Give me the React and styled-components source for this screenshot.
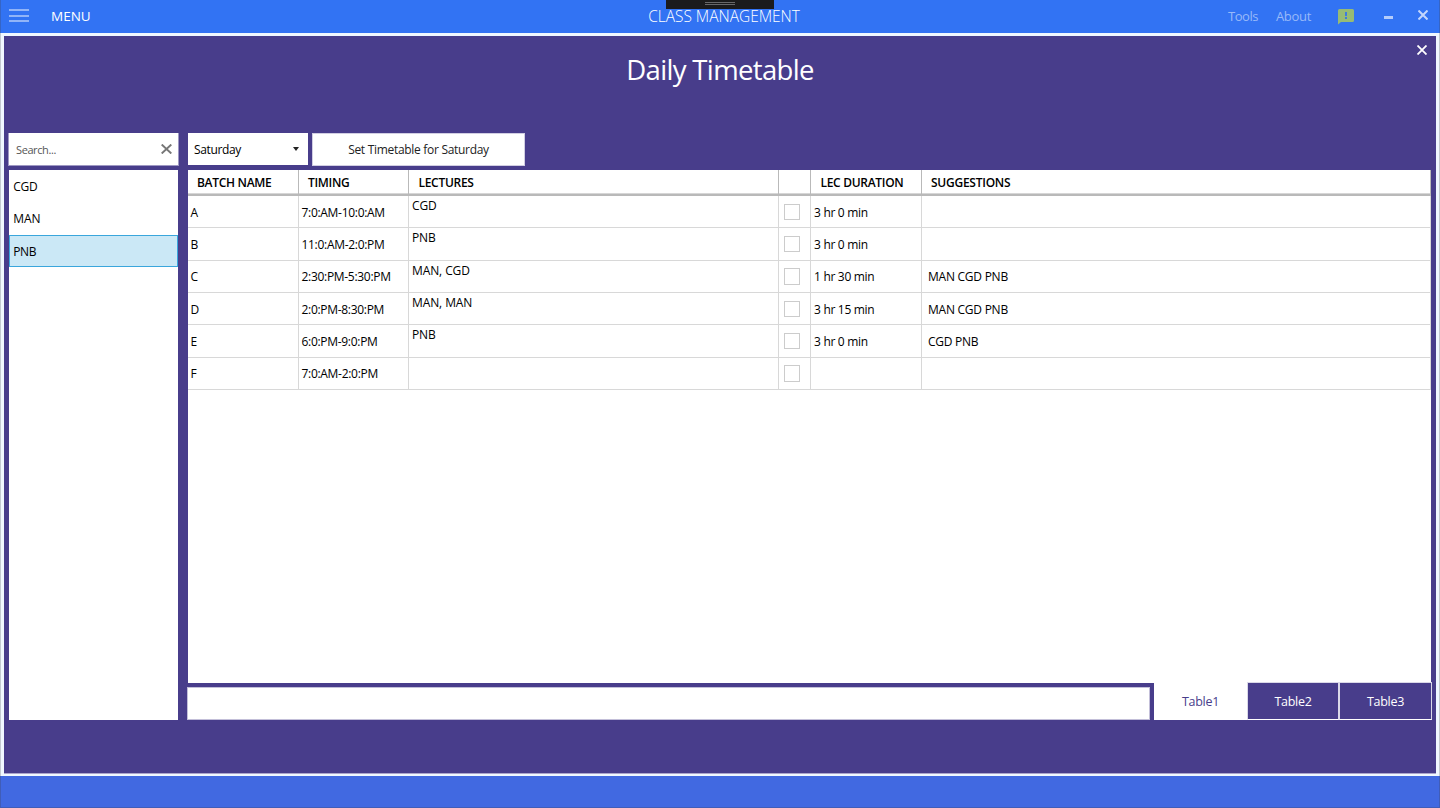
import React from "react";
import styled, { createGlobalStyle } from "styled-components";

const purple = "#483d8b";

const GlobalStyle = createGlobalStyle`
  * { box-sizing: border-box; }
  body {
    margin: 0;
    overflow: hidden;
    font-family: "Open Sans", "Noto Sans", sans-serif;
    font-size: 12px;
    color: #000;
  }
  svg { display: block; flex: none; }
`;

const Label = styled.span`
  display: block;
  flex: none;
  white-space: pre;
  line-height: 16px;
  letter-spacing: ${(p) => p.$ls ?? -0.3}px;
`;

const Window = styled.div`
  position: relative;
  display: flex;
  flex-direction: column;
  width: 1440px;
  height: 808px;
  background: #f0f8ff;
  &::after {
    content: "";
    position: absolute;
    inset: 0;
    border: solid rgba(60, 60, 70, 0.26);
    border-width: 0 1px 1px;
    pointer-events: none;
  }
`;

const TitleBar = styled.header`
  position: relative;
  display: flex;
  align-items: center;
  height: 33px;
  padding-left: 9px;
  background: #3273f3;
  color: #fff;
`;

const Burger = styled.div`
  display: flex;
  flex-direction: column;
  justify-content: space-between;
  width: 20px;
  height: 13px;
  margin: -2px 22px 0 0;
  i {
    height: 2px;
    background: #91b4f8;
  }
`;

const Menu = styled(Label)`
  margin-top: -2px;
  font-size: 13.5px;
`;

const AppName = styled.div`
  position: absolute;
  inset: 0;
  display: flex;
  justify-content: center;
  padding: 8px 0 0 8px;
  font-size: 15.5px;
  font-weight: 300;
  pointer-events: none;
`;

const Commands = styled.nav`
  display: flex;
  align-items: center;
  height: 33px;
  margin-left: auto;
  padding-right: 12px;
  font-size: 13px;
  color: #98b9f9;
`;

const Command = styled(Label)`
  margin: -1px 0 0 18px;
`;

const FeedbackIcon = styled.svg`
  margin-left: 27px;
`;

const MinimizeIcon = styled.svg`
  margin: 2px 0 0 30px;
`;

const CloseIcon = styled.svg`
  margin: -3px 0 0 25px;
`;

const Grip = styled.div`
  position: absolute;
  top: 0;
  left: 666px;
  width: 108px;
  height: 9px;
  padding: 2px 39px 0;
  background: #1b1b1c;
  i {
    display: block;
    height: 3px;
    border: solid #68686a;
    border-width: 1px 0;
  }
`;

const Panel = styled.main`
  display: flex;
  flex-direction: column;
  height: 738px;
  margin: 3px 4px 2px;
  padding: 0 4px;
  background: ${purple};
  border-bottom: 1px solid #aca6cc;
`;

const PanelHead = styled.div`
  display: flex;
  justify-content: center;
  position: relative;
  height: 97px;
  padding-top: 16px;
  color: #fff;
  font-size: 27.5px;
  ${Label} { line-height: 36px; }
`;

const PanelClose = styled.svg`
  position: absolute;
  top: 9px;
  right: 5px;
`;

const Columns = styled.div`
  display: flex;
  gap: 8px;
  height: 587px;
`;

const Sidebar = styled.aside`
  display: flex;
  flex-direction: column;
  gap: 4px;
  width: 171px;
`;

const SearchBox = styled.div`
  display: flex;
  align-items: center;
  justify-content: space-between;
  height: 33px;
  padding: 0 6px 0 7px;
  background: #fff;
  border: solid #9e98c3;
  border-width: 0 1px 1px;
  font-size: 11px;
  color: #555;
  ${Label} { padding-top: 1px; }
`;

const List = styled.div`
  flex: 1;
  margin: 0 1px;
  background: #fff;
`;

const ListItem = styled.div`
  height: ${(p) => p.$h}px;
  padding: ${(p) => p.$top}px 0 0 3.25px;
  border: 1px solid ${(p) => (p.$selected ? "#3aa6dc" : "transparent")};
  background: ${(p) => (p.$selected ? "#cbe8f6" : "#fff")};
`;

const Content = styled.section`
  display: flex;
  flex-direction: column;
  width: 1245px;
`;

const Toolbar = styled.div`
  display: flex;
  gap: 4px;
  height: 37px;
  padding-left: 1px;
`;

const Select = styled.div`
  display: flex;
  align-items: center;
  justify-content: space-between;
  width: 120px;
  height: 32px;
  padding: 2px 9px 0 6px;
  background: #fff;
  svg { margin-top: -3px; }
`;

const Button = styled.div`
  display: flex;
  justify-content: center;
  width: 213px;
  height: 33px;
  padding-top: 8px;
  background: #fff;
  border: 1px solid #d1cee2;
  color: #222;
`;

const Grid = styled.div`
  height: 513px;
  margin: 0 1px;
  background: #fff;
`;

const Row = styled.div`
  display: grid;
  grid-template-columns: 111px 110px 370px 32px 111px 509px;
  height: ${(p) => p.$h}px;
`;

const HeadCell = styled.div`
  padding: 5px 0 0 ${(p) => p.$pad ?? 9.5}px;
  border-right: 1px solid #b9b9b9;
  font-weight: 600;
`;

const HeadRow = styled(Row)`
  border-bottom: 2px solid #b9b9b9;
  box-shadow: inset 0 -1px #d6d6d6;
`;

const Cell = styled.div`
  padding: ${(p) => p.$top}px 0 0 ${(p) => p.$pad ?? 3}px;
  border: solid #d8d8d8;
  border-width: 0 1px 1px 0;
`;

const Check = styled.i`
  display: block;
  width: 16px;
  height: ${(p) => p.$h}px;
  border: 1px solid #cccccc;
`;

const Footer = styled.div`
  display: flex;
  gap: 4px;
  height: 37px;
`;

const Entry = styled.div`
  width: 963px;
  height: 33px;
  margin-top: 4px;
  background: #fff;
  border: 1px solid #c3bfd9;
`;

const Tabs = styled.div`
  display: flex;
  width: 278px;
  height: 38px;
  margin-top: -1px;
`;

const Tab = styled.div`
  display: flex;
  justify-content: center;
  width: ${(p) => p.$w}px;
  padding-top: ${(p) => (p.$active ? 12 : 11)}px;
  font-size: 12.5px;
  background: ${(p) => (p.$active ? "#fff" : purple)};
  color: ${(p) => (p.$active ? purple : "#fff")};
  border: ${(p) => (p.$active ? 0 : 1)}px solid #dad8e8;
  border-bottom-color: #fff;
`;

const StatusBar = styled.footer`
  height: 32px;
  background: #4169e1;
`;

const rows = [
  ["A", "7:0:AM-10:0:AM", "CGD", "3 hr 0 min", "", 32, 8],
  ["B", "11:0:AM-2:0:PM", "PNB", "3 hr 0 min", "", 33, 8],
  ["C", "2:30:PM-5:30:PM", "MAN, CGD", "1 hr 30 min", "MAN CGD PNB", 32, 7],
  ["D", "2:0:PM-8:30:PM", "MAN, MAN", "3 hr 15 min", "MAN CGD PNB", 32, 8],
  ["E", "6:0:PM-9:0:PM", "PNB", "3 hr 0 min", "CGD PNB", 33, 8],
  ["F", "7:0:AM-2:0:PM", "", "", "", 32, 7],
];

export default function App() {
  return (
    <>
      <GlobalStyle />
      <Window>
        <TitleBar>
          <Burger><i /><i /><i /></Burger>
          <Menu $ls={0}>MENU</Menu>
          <AppName><Label $ls={-0.02}>CLASS MANAGEMENT</Label></AppName>
          <Commands>
            <Command $ls={-0.5}>Tools</Command>
            <Command>About</Command>
            <FeedbackIcon width="16" height="16" viewBox="0 0 16 16">
              <path d="M1.500 0h13Q16 0 16 1.500v10Q16 13 14.500 13H3L0 15.500V1.500Q0 0 1.500 0z" fill="#97bb75" />
              <path d="M7 3h2v4H7zM7 8h2v2H7z" fill="#3e7be0" />
            </FeedbackIcon>
            <MinimizeIcon width="9" height="3">
              <rect width="9" height="3" fill="#b4ccfb" />
            </MinimizeIcon>
            <CloseIcon width="10" height="10" viewBox="0 0 10 10">
              <path d="M.5 .5 9.5 9.5M9.5 .5 .5 9.5" stroke="#c3d6fc" strokeWidth="2" />
            </CloseIcon>
          </Commands>
          <Grip><i /></Grip>
        </TitleBar>

        <Panel>
          <PanelHead>
            <Label $ls={-0.65}>Daily Timetable</Label>
            <PanelClose width="10" height="10" viewBox="0 0 10 10">
              <path d="M.5 .5 9.5 9.5M9.5 .5 .5 9.5" stroke="#fff" strokeWidth="1.800" />
            </PanelClose>
          </PanelHead>
          <Columns>
            <Sidebar>
              <SearchBox>
                <Label $ls={-0.4}>Search...</Label>
                <svg width="11" height="10" viewBox="0 0 11 10">
                  <path d="M.7 .5 10.300 9.500M10.300 .5 .7 9.500" stroke="#777" strokeWidth="1.900" />
                </svg>
              </SearchBox>
              <List>
                <ListItem $h={32} $top={8}><Label>CGD</Label></ListItem>
                <ListItem $h={33} $top={8}><Label $ls={-0.1}>MAN</Label></ListItem>
                <ListItem $h={32} $top={8} $selected><Label $ls={-0.4}>PNB</Label></ListItem>
              </List>
            </Sidebar>
            <Content>
              <Toolbar>
                <Select>
                  <Label $ls={-0.35}>Saturday</Label>
                  <svg width="6" height="4" viewBox="0 0 6 4"><path d="M0 0h6L3 4z" fill="#222" /></svg>
                </Select>
                <Button><Label>Set Timetable for Saturday</Label></Button>
              </Toolbar>
              <Grid>
                <HeadRow $h={26}>
                  <HeadCell $pad={9}><Label>BATCH NAME</Label></HeadCell>
                  <HeadCell $pad={9}><Label>TIMING</Label></HeadCell>
                  <HeadCell><Label>LECTURES</Label></HeadCell>
                  <HeadCell />
                  <HeadCell><Label>LEC DURATION</Label></HeadCell>
                  <HeadCell $pad={9}><Label $ls={-0.25}>SUGGESTIONS</Label></HeadCell>
                </HeadRow>
                {rows.map(([name, timing, lectures, duration, suggestions, h, top]) => (
                  <Row key={name} $h={h}>
                    <Cell $top={top + 1} $pad={2.5}><Label>{name}</Label></Cell>
                    <Cell $top={top + 1} $pad={2.5}><Label>{timing}</Label></Cell>
                    <Cell $top={2}><Label $ls={-0.1}>{lectures}</Label></Cell>
                    <Cell $top={top} $pad={5}><Check $h={24 - top} /></Cell>
                    <Cell $top={top + 1}><Label>{duration}</Label></Cell>
                    <Cell $top={top + 1} $pad={6}><Label $ls={-0.25}>{suggestions}</Label></Cell>
                  </Row>
                ))}
              </Grid>
              <Footer>
                <Entry />
                <Tabs>
                  <Tab $active $w={93}><Label>Table1</Label></Tab>
                  <Tab $w={92}><Label>Table2</Label></Tab>
                  <Tab $w={93}><Label>Table3</Label></Tab>
                </Tabs>
              </Footer>
            </Content>
          </Columns>
        </Panel>
        <StatusBar />
      </Window>
    </>
  );
}
